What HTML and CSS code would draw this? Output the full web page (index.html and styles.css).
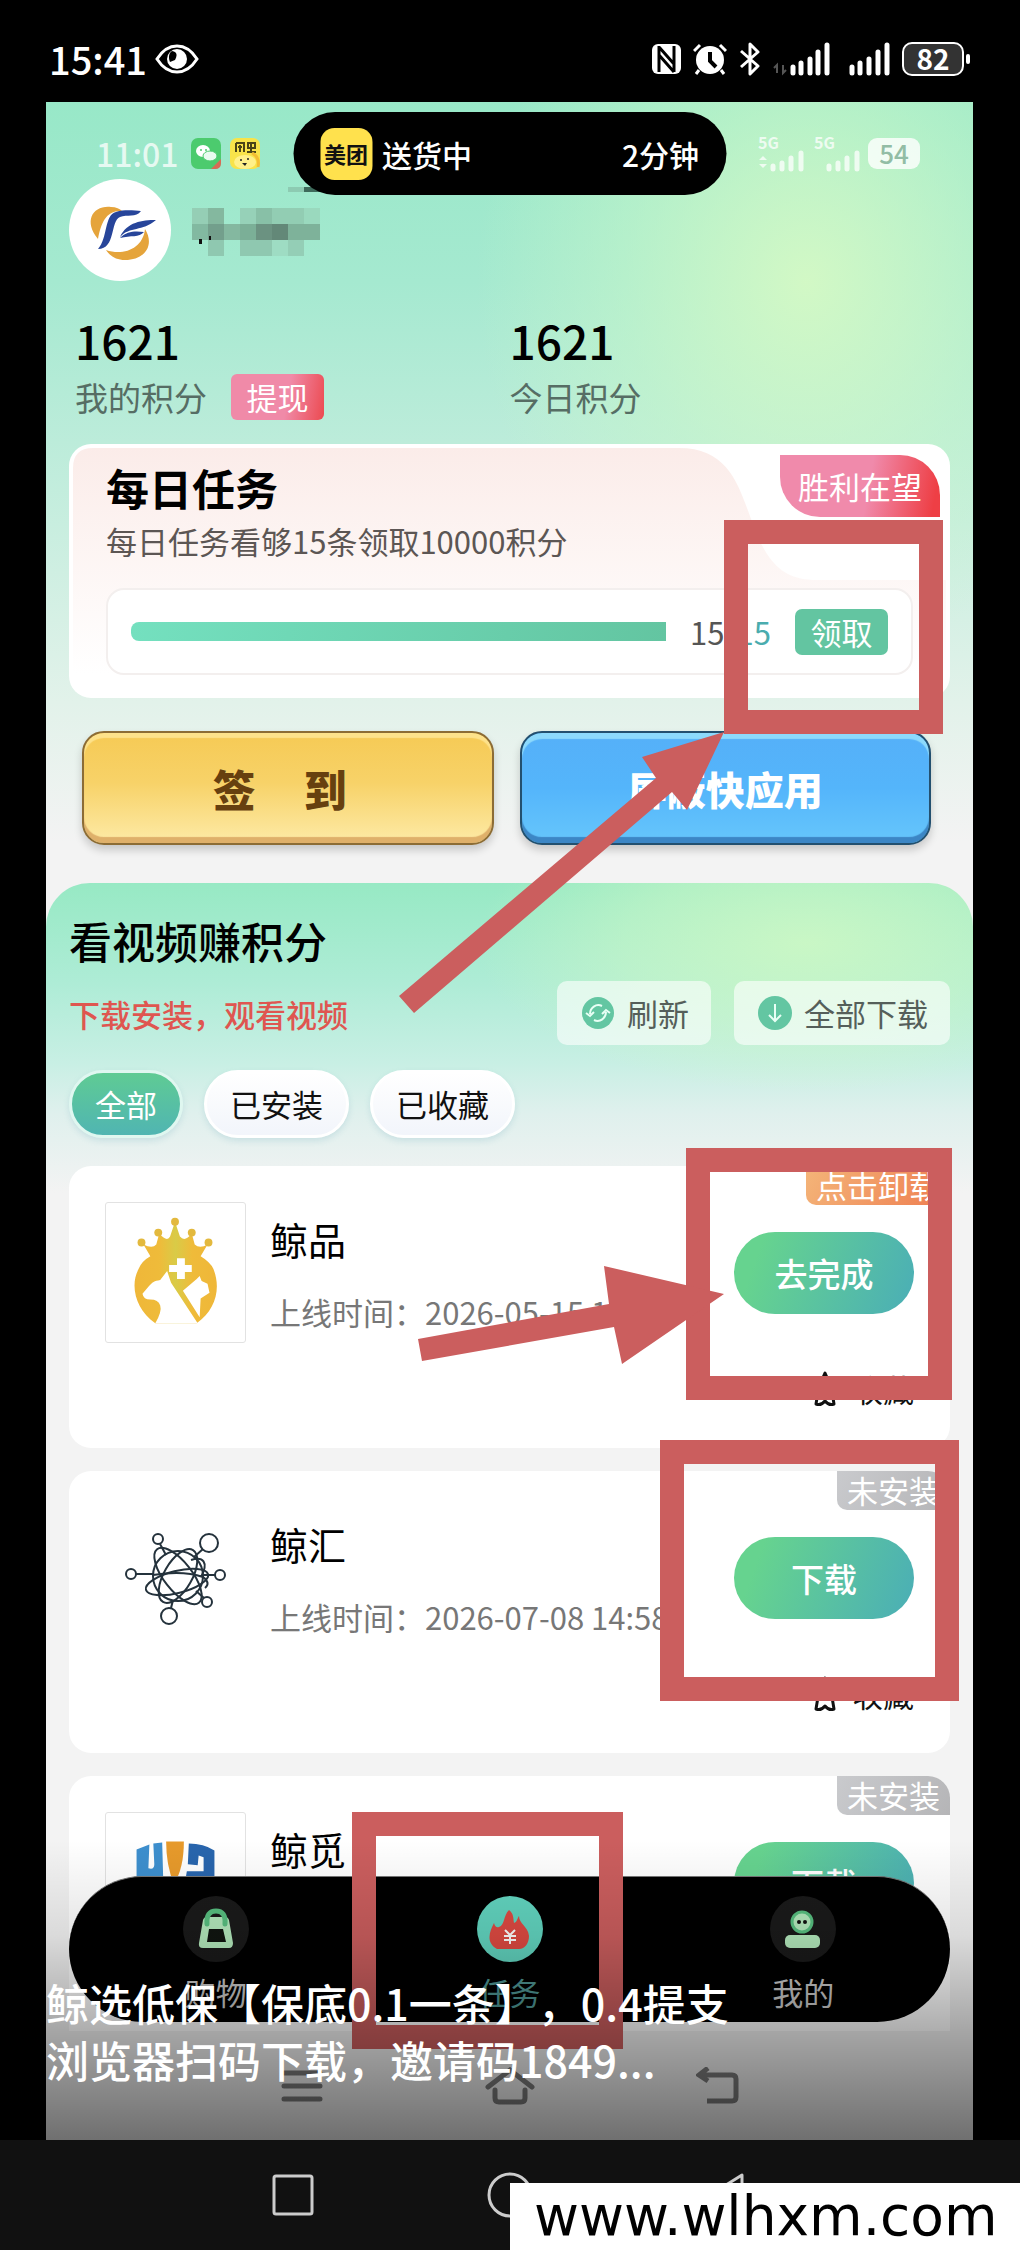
FILE: index.html
```html
<!DOCTYPE html>
<html lang="zh-CN">
<head>
    <meta charset="UTF-8">
    <meta name="viewport" content="width=device-width, initial-scale=1.0">
    <title>看视频赚积分</title>
    <link rel="stylesheet" href="styles.css">
</head>
<body>
    <header class="status-bar">
        <div class="status-left">
            <span class="clock">15:41</span>
            <svg width="44" height="32" viewBox="0 0 44 32"><path d="M2 16C9 5 16 3 22 3s13 2 20 13C35 27 28 29 22 29S9 27 2 16z" fill="none" stroke="#fff" stroke-width="3"/><circle cx="22" cy="16" r="10" fill="#fff"/><path d="M17 8c6 1 5 5 3 9l-5 2c-2-5-1-9 2-11z" fill="#000"/></svg>
        </div>
        <div class="status-right">
            <svg width="30" height="32" viewBox="0 0 30 32"><rect x="0" y="1" width="29" height="30" rx="6" fill="#fff"/><path d="M7 3v26M22 3v26M7 4l15 17M7 12l15 17" stroke="#000" stroke-width="3" fill="none"/></svg>
            <svg class="alarm" width="34" height="32" viewBox="0 0 34 32"><circle cx="17" cy="17" r="14" fill="#fff"/><path d="M1 8l6-6M33 8l-6-6M6 27l-3 4M28 27l3 4" stroke="#fff" stroke-width="3"/><path d="M17 9v9l6 6" stroke="#000" stroke-width="4" fill="none"/></svg>
            <svg class="bluetooth" width="22" height="34" viewBox="0 0 22 34"><path d="M2 9l17 15-8 8V2l8 8L2 25" fill="none" stroke="#fff" stroke-width="3" stroke-linejoin="round"/></svg>
            <svg class="signal" width="58" height="34" viewBox="0 0 58 34"><path d="M4 31v-8l-3 3M10 23v8l3-3" stroke="#555" stroke-width="2" fill="none"/><path d="M20 31v-6M28 31v-10M37 31v-14M45 31V10M54 31V3" stroke="#fff" stroke-width="5" stroke-linecap="round"/></svg>
            <svg class="signal" width="42" height="34" viewBox="0 0 42 34"><path d="M3 31v-6M11 31v-10M20 31v-14M29 31V10M38 31V3" stroke="#fff" stroke-width="5" stroke-linecap="round"/></svg>
            <span class="battery">82</span>
        </div>
    </header>

    <main class="screen">
        <div class="app">
            <div class="app-status">
                <span class="app-clock">11:01</span>
                <svg class="app-icon" width="30" height="31" viewBox="0 0 30 31"><rect width="30" height="31" rx="7" fill="#4ccb6e"/><ellipse cx="12" cy="13" rx="7" ry="6" fill="#fff"/><ellipse cx="19" cy="18" rx="7" ry="5" fill="#e9fbf0" stroke="#4ccb6e"/><circle cx="10" cy="12" r="1" fill="#4ccb6e"/><circle cx="15" cy="12" r="1" fill="#4ccb6e"/><path d="M20 31l10-10v4q0 6-6 6z" fill="#d96a55"/></svg>
                <svg class="app-icon" width="30" height="31" viewBox="0 0 30 31"><rect width="30" height="31" rx="7" fill="#f8e34a"/><path d="M6 5v9M6 5h8v9M10 7v7M8 9h4M18 5h7v5h-7zM21 5v9M17 14h9" stroke="#4b4418" stroke-width="2" fill="none"/><ellipse cx="15" cy="24" rx="11" ry="7" fill="#fff08a"/><path d="M22 15q8 4 6 14" stroke="#f3bd35" stroke-width="3" fill="none"/><circle cx="11" cy="22" r="1" fill="#222"/><circle cx="18" cy="21" r="1" fill="#222"/><path d="M12 25h5l-2 3z" fill="#222"/></svg>
                <div class="networks">
                    <div class="network">
                        <span>5G</span>
                        <svg width="48" height="22" viewBox="0 0 48 22"><path d="M1 10l4-4 4 4zM1 14l4 4 4-4z" fill="#fff"/><path d="M15 19v-3M24 19v-6M33 19V8M43 19V3" stroke="#fff" stroke-width="5" stroke-linecap="round"/></svg>
                    </div>
                    <div class="network">
                        <span>5G</span>
                        <svg width="48" height="22" viewBox="0 0 48 22"><path d="M15 19v-3M24 19v-6M33 19V8M43 19V3" stroke="#fff" stroke-width="5" stroke-linecap="round"/></svg>
                    </div>
                </div>
                <span class="app-battery">54</span>
            </div>
            <div class="island">
                <span class="island-logo">美团</span>
                <span class="island-text">送货中</span>
                <span class="island-time">2分钟</span>
            </div>

            <section class="profile">
                <svg class="avatar" viewBox="0 0 103 103"><circle cx="51" cy="51" r="51" fill="#fff"/><path d="M29 60C14 42 24 26 42 28c5 0 9 2 11 4-16-1-21 12-24 28z" fill="#e5a43b"/><path d="M37 71c17 6 37-1 39-21 10 16 0 31-20 31-9 0-15-4-19-10z" fill="#e5a43b"/><path d="M72 32c-6 0-15-2-25 1-12 3-8 26-18 37 18 0 12-28 22-32 7-3 16 1 21-6z" fill="#27459a"/><path d="M87 41c-14 0-29 2-36 17 10-11 22-5 36-17zM75 53c-9-1-17-1-24 6 11-3 19 0 24-6z" fill="#27459a"/></svg>
                <svg class="masked-name" viewBox="0 0 128 76" shape-rendering="crispEdges">
                    <path d="M96 3h16v5H96z" fill="#8dcbb2"/><path d="M112 3h16v5h-16z" fill="#3e6b5b"/>
                    <path d="M0 24h16v16H0z" fill="#95ceb5"/><path d="M16 24h16v16H16z" fill="#84b89f"/><path d="M48 24h16v16H48z" fill="#96d1b8"/><path d="M64 24h16v16H64z" fill="#88c0a7"/><path d="M80 24h32v16H80z" fill="#92cdb3"/><path d="M112 24h16v16h-16z" fill="#9ad9be"/>
                    <path d="M0 40h16v16H0z" fill="#82b9a1"/><path d="M16 40h16v16H16z" fill="#739f8c"/><path d="M32 40h16v16H32z" fill="#84b8a0"/><path d="M48 40h16v16H48z" fill="#7baf97"/><path d="M64 40h16v16H64z" fill="#6b9281"/><path d="M80 40h16v16H80z" fill="#638878"/><path d="M96 40h32v16H96z" fill="#7eb29a"/>
                    <path d="M16 56h16v16H16z" fill="#8fc8b0"/><path d="M48 56h32v16H48z" fill="#8fc8b0"/><path d="M80 56h16v16H80z" fill="#9edcc3"/><path d="M96 56h16v16H96z" fill="#94ceb6"/>
                    <path d="M7 55h3v5H7zM17 52h2v4h-2z" fill="#111"/>
                </svg>
            </section>

            <section class="stats">
                <div class="stat">
                    <strong class="stat-num">1621</strong>
                    <div class="stat-row">我的积分 <button class="withdraw">提现</button></div>
                </div>
                <div class="stat">
                    <strong class="stat-num">1621</strong>
                    <div class="stat-row">今日积分</div>
                </div>
            </section>

            <section class="daily">
                <svg class="daily-bg" viewBox="0 0 881 254" preserveAspectRatio="none"><defs><linearGradient id="pink" x1="0" y1="0" x2="0" y2="1"><stop offset="0" stop-color="#fbece9"/><stop offset="1" stop-color="#fff"/></linearGradient></defs><path d="M4 24Q4 4 24 4H610c66 0 62 66 88 106 12 18 26 26 50 26h129V230H4z" fill="url(#pink)"/></svg>
                <span class="daily-badge">胜利在望</span>
                <h2>每日任务</h2>
                <p>每日任务看够15条领取10000积分</p>
                <div class="progress">
                    <div class="bar"></div>
                    <span class="count">15/<b>15</b></span>
                    <button class="claim">领取</button>
                </div>
            </section>

            <div class="actions">
                <button class="big gold"><span>签</span><span>到</span></button>
                <button class="big blue">屏蔽快应用</button>
            </div>

            <section class="videos">
                <h2>看视频赚积分</h2>
                <div class="tools">
                    <span class="hint">下载安装，观看视频</span>
                    <button class="tool"><svg width="34" height="34" viewBox="0 0 34 34"><circle cx="17" cy="17" r="16" fill="#63c6a2"/><path d="M9 18c0-6 6-11 12-8M25 16c0 6-6 11-12 8M5 17l4 3 4-4M29 17l-4-3-4 4" fill="none" stroke="#e8fff5" stroke-width="2"/></svg>刷新</button>
                    <button class="tool"><svg width="34" height="34" viewBox="0 0 34 34"><circle cx="17" cy="17" r="17" fill="#63c6a2"/><path d="M17 8v17M11 19l6 6 6-6" fill="none" stroke="#e8fff5" stroke-width="2"/></svg>全部下载</button>
                </div>
                <div class="chips">
                    <button class="chip active">全部</button>
                    <button class="chip">已安装</button>
                    <button class="chip">已收藏</button>
                </div>

                <div class="list">
                    <article class="item">
                        <span class="tag orange">点击卸载</span>
                        <svg class="thumb framed" viewBox="0 0 141 141">
                            <defs><linearGradient id="gold" x1="0" x2="1"><stop offset="0" stop-color="#efb739"/><stop offset=".3" stop-color="#efbb3a"/><stop offset=".5" stop-color="#d9cb47"/><stop offset=".7" stop-color="#efbb3a"/><stop offset="1" stop-color="#efb739"/></linearGradient></defs>
                            <g fill="url(#gold)"><path d="M50 122C30 108 24 84 33 67q3-8 12-13L38 42q9 5 13 0l3-11q8 9 11 3l5-15 5 15q5 6 12-3l3 11q5 5 13 0l-7 12q10 6 13 13c8 20 2 42-17 55z"/></g>
                            <g fill="#e3b93e"><circle cx="36" cy="40" r="4"/><circle cx="53" cy="30" r="4"/><circle cx="70" cy="19" r="4"/><circle cx="87" cy="30" r="4"/><circle cx="104" cy="40" r="4"/></g>
                            <path d="M37 92l6-7c4-5 6-6 12-7l7-9 4 12 27 41H50q7-12 5-18-2-6-10-6-7 0-8-6zM78 89l14-12 3-3 2 5 6 3 2 9-9 6-1 19z" fill="#fff"/>
                            <path d="M72 56h8v7h7v7h-7v7h-8v-7h-8v-7h8z" fill="#fff"/>
                        </svg>
                        <div class="info"><h3>鲸品</h3><p>上线时间：2026-05-15 1</p></div>
                        <div class="side">
                            <button class="go">去完成</button>
                            <button class="fav"><svg width="30" height="38" viewBox="0 0 30 38"><path d="M15 3l4 9 8 2-5 8 2 12q-5 2-9-3-4 5-9 3l2-12-5-8 8-2z" fill="none" stroke="#111" stroke-width="3" stroke-linejoin="round"/></svg>收藏</button>
                        </div>
                    </article>
                    <article class="item">
                        <span class="tag">未安装</span>
                        <svg class="thumb" viewBox="0 0 141 141"><g fill="none" stroke="#24323c" stroke-width="2"><circle cx="73" cy="69" r="25"/><ellipse cx="73" cy="69" rx="14" ry="30" transform="rotate(30 73 69)"/><ellipse cx="73" cy="69" rx="14" ry="34" transform="rotate(-38 73 69)"/><ellipse cx="72" cy="75" rx="32" ry="11" transform="rotate(-14 72 75)"/><path d="M48 68q30-5 50 2 8 6 2 11M86 53c12-4 18 2 10 17"/><circle cx="53" cy="32" r="5"/><path d="M55 37l6 11"/><circle cx="104" cy="36" r="9"/><path d="M98 42l-9 8"/><circle cx="26" cy="67" r="5"/><path d="M31 67h17"/><circle cx="115" cy="68" r="5"/><path d="M110 68H98"/><circle cx="102" cy="95" r="5"/><path d="M99 91l-8-7"/><circle cx="64" cy="109" r="8"/><path d="M66 101l2-8"/></g></svg>
                        <div class="info"><h3>鲸汇</h3><p>上线时间：2026-07-08 14:58</p></div>
                        <div class="side">
                            <button class="go">下载</button>
                            <button class="fav"><svg width="30" height="38" viewBox="0 0 30 38"><path d="M15 3l4 9 8 2-5 8 2 12q-5 2-9-3-4 5-9 3l2-12-5-8 8-2z" fill="none" stroke="#111" stroke-width="3" stroke-linejoin="round"/></svg>收藏</button>
                        </div>
                    </article>
                    <article class="item">
                        <span class="tag">未安装</span>
                        <svg class="thumb framed" viewBox="0 0 141 141"><path d="M31 37l13-5-1 24q6 2 6-4l-1-21 9-1 1 36 4 24-20-2-11-20z" fill="#3d8fce"/><path d="M61 29h18q0 27-10 43-8-18-8-43z" fill="#e79a2b"/><path d="M84 31q15 0 26 7v26L92 82l-13-5 3-18h17V45l-5-2-1 10-10-1z" fill="#2865ad"/></svg>
                        <div class="info"><h3>鲸觅</h3></div>
                        <div class="side"><button class="go">下载</button></div>
                    </article>
                </div>
            </section>

            <nav class="tabbar">
                <a href="#" class="tab"><svg width="66" height="66" viewBox="0 0 66 66"><circle cx="33" cy="33" r="33" fill="#1a1a1a"/><path d="M20 24q1-3 4-3h18q3 0 4 3l4 23q0 5-4 5H20q-5 0-4-5z" fill="#b4eabd"/><path d="M24 28q-1-13 9-13t9 13" fill="none" stroke="#58bf80" stroke-width="5" stroke-linecap="round"/><path d="M26 33h14l3 13H24z" fill="#101510"/></svg>购物</a>
                <a href="#" class="tab current"><svg width="66" height="66" viewBox="0 0 66 66"><circle cx="33" cy="33" r="33" fill="#62d5c0"/><path d="M20 53C8 46 13 35 17 27c1 4 3 5 5 4 6-2 4-11 10-17 5 4 4 8 5 13 3-1 3-4 5-7 0 8 9 10 10 20 0 7-4 13-10 13z" fill="#df4a42"/><path d="M28 34l5 5 5-5M27 40h12M27 44h12M33 38v10" stroke="#fff" stroke-width="2" fill="none"/></svg>任务</a>
                <a href="#" class="tab"><svg width="66" height="66" viewBox="0 0 66 66"><circle cx="33" cy="33" r="33" fill="#1a1a1a"/><circle cx="32" cy="26" r="10" fill="#b4eabd" stroke="#58bf80" stroke-width="3"/><circle cx="29" cy="26" r="2" fill="#111"/><circle cx="35" cy="26" r="2" fill="#111"/><rect x="15" y="39" width="35" height="13" rx="5" fill="#b4eabd"/></svg>我的</a>
            </nav>
        </div>

        <div class="app-nav">
            <svg width="44" height="38" viewBox="0 0 44 38"><path d="M4 6h36M4 19h36M4 32h36" stroke="#7c7c7c" stroke-width="5" stroke-linecap="round"/></svg>
            <svg width="52" height="38" viewBox="0 0 52 38"><path d="M4 20L26 3l22 17M11 23v8q0 4 4 4h22q4 0 4-4v-8" fill="none" stroke="#7c7c7c" stroke-width="5" stroke-linecap="round"/></svg>
            <svg width="44" height="38" viewBox="0 0 44 38"><path d="M12 1L3 8l9 6M4 8h32q4 0 4 4v18q0 4-4 4H11" fill="none" stroke="#7c7c7c" stroke-width="5"/></svg>
        </div>

        <!-- red guide frames and arrows -->
        <svg class="guide" width="927" height="2038" viewBox="46 102 927 2038">
            <g fill="none" stroke="#cb5e5e" stroke-width="24">
                <rect x="736" y="532" width="195" height="190"/>
                <rect x="698" y="1160" width="242" height="228"/>
                <rect x="672" y="1452" width="275" height="237"/>
                <rect x="364" y="1824" width="247" height="213"/>
            </g>
            <g fill="#cb5e5e">
                <path d="M399 996L656 778 642 757 724 732 687 810 672 792 414 1013z"/>
                <path d="M418 1339L609 1304 604 1266 724 1294 622 1364 614 1327 422 1361z"/>
            </g>
        </svg>
        <div class="caption">鲸选低保【保底0.1一条】，0.4提支<br>浏览器扫码下载，邀请码1849...</div>
    </main>

    <footer class="nav-bar">
        <svg width="46" height="46" viewBox="0 0 46 46"><rect x="4" y="4" width="38" height="38" rx="2" fill="none" stroke="#ccc" stroke-width="3"/></svg>
        <svg width="46" height="46" viewBox="0 0 46 46"><circle cx="23" cy="23" r="21" fill="none" stroke="#ccc" stroke-width="3"/></svg>
        <svg width="46" height="46" viewBox="0 0 46 46"><path d="M38 3v40L6 23z" fill="none" stroke="#ccc" stroke-width="3" stroke-linejoin="round"/></svg>
        <div class="watermark">www.wlhxm.com</div>
    </footer>
</body>
</html>
```
FILE: styles.css
```css
* {
    box-sizing: border-box;
}
body {
    margin: 0;
    height: 100vh;
    display: flex;
    flex-direction: column;
    overflow: hidden;
    background: #000;
    color: #000;
    font-family: "Noto Sans CJK SC", sans-serif;
    font-size: 31px;
    text-spacing-trim: space-all;
}
h2, h3, p {
    margin: 0;
}
button {
    border: none;
    padding: 0;
    font-family: inherit;
    font-size: 31px;
    line-height: 40px;
    cursor: pointer;
    white-space: nowrap;
}
svg {
    flex-shrink: 0;
    display: block;
}

/* phone status bar */
.status-bar {
    height: 102px;
    flex-shrink: 0;
    padding: 16px 56px 0 49px;
    display: flex;
    align-items: center;
    justify-content: space-between;
    color: #fff;
}
.status-left, .status-right {
    display: flex;
    align-items: center;
}
.clock {
    font-size: 38px;
    font-weight: 500;
    line-height: 40px;
    margin-right: 8px;
}
.alarm {
    margin-left: 11px;
}
.bluetooth {
    margin-left: 12px;
}
.signal {
    margin-left: 12px;
}
.signal + .signal {
    margin-left: 18px;
}
.battery {
    position: relative;
    width: 62px;
    height: 34px;
    margin-left: 11px;
    border: 2px solid #fff;
    border-radius: 10px;
    background: #333;
    font-size: 28px;
    font-weight: 700;
    line-height: 29px;
    text-align: center;
}
.battery::after {
    content: "";
    position: absolute;
    right: -8px;
    top: 10px;
    width: 4px;
    height: 10px;
    border-radius: 2px;
    background: #fff;
}

/* app screen */
.screen {
    position: relative;
    flex: 1;
    min-height: 0;
    margin: 0 47px 0 46px;
    display: flex;
    flex-direction: column;
    background: #f3f3f3;
    overflow: hidden;
}
.app {
    position: relative;
    flex: 1;
    min-height: 0;
    overflow: hidden;
    background:
        radial-gradient(ellipse 330px 380px at 82% 180px, rgba(215, 250, 196, 0.9), rgba(200, 247, 200, 0.5) 55%, rgba(200, 247, 200, 0)),
        linear-gradient(#98e8c8, #a5e9d0 180px, #bcecda 340px, #e2f2ea 600px, #f3f3f3 740px);
}
.app-status {
    height: 77px;
    padding: 25px 53px 0 50px;
    display: flex;
    align-items: center;
}
.app-clock {
    color: rgba(255, 255, 255, 0.75);
    font-size: 32px;
    font-weight: 500;
    line-height: 40px;
    margin-right: 12px;
}
.app-icon {
    margin-right: 9px;
}
.networks {
    display: flex;
    gap: 8px;
    margin-left: auto;
    opacity: 0.75;
}
.network {
    color: #fff;
    font-size: 16px;
    font-weight: 700;
    line-height: 16px;
}
.app-battery {
    width: 52px;
    height: 31px;
    margin-left: 6px;
    border-radius: 9px;
    background: rgba(255, 255, 255, 0.8);
    color: #92bda5;
    font-size: 26px;
    font-weight: 500;
    line-height: 30px;
    text-align: center;
}
.island {
    position: absolute;
    top: 10px;
    left: 50%;
    transform: translateX(-50%);
    width: 433px;
    height: 83px;
    padding: 0 27px;
    border-radius: 42px;
    background: #000;
    color: #fff;
    display: flex;
    align-items: center;
    font-size: 30px;
    font-weight: 500;
    line-height: 40px;
}
.island-logo {
    width: 52px;
    height: 52px;
    margin-right: 10px;
    border-radius: 14px;
    background: #ffe14d;
    color: #111;
    font-size: 22px;
    font-weight: 700;
    line-height: 50px;
    text-align: center;
}
.island-time {
    margin-left: auto;
}

.profile {
    display: flex;
    padding-left: 23px;
}
.avatar {
    width: 103px;
    height: 103px;
}
.masked-name {
    width: 128px;
    height: 76px;
    margin: 5px 0 0 20px;
}

.stats {
    display: grid;
    grid-template-columns: 1fr 1fr;
    margin-top: 28px;
}
.stat:first-child {
    padding-left: 29px;
}
.stat-num {
    display: block;
    font-size: 46px;
    font-weight: 500;
    line-height: 60px;
    margin-bottom: 4px;
}
.stat-row {
    display: flex;
    align-items: center;
    height: 46px;
    font-size: 33px;
    color: #566d64;
}
.withdraw {
    width: 93px;
    height: 46px;
    margin-left: 24px;
    border-radius: 6px;
    background: linear-gradient(100deg, #f08aa8 60%, #ec4a50);
    color: #fff;
}

/* daily task card */
.daily {
    position: relative;
    margin: 24px 23px 0;
    padding: 15px 37px 23px;
    border-radius: 22px;
    background: #fff;
}
.daily > * {
    position: relative;
}
.daily .daily-bg {
    position: absolute;
    left: 0;
    top: 0;
    width: 100%;
    height: 100%;
}
.daily h2 {
    font-size: 43px;
    font-weight: 700;
    line-height: 56px;
    margin-bottom: 3px;
}
.daily p {
    line-height: 46px;
    color: #5c5654;
}
.daily .daily-badge {
    position: absolute;
    right: 10px;
    top: 11px;
    width: 160px;
    height: 62px;
    border-radius: 0 40px 0 40px;
    background: linear-gradient(100deg, #f08aab 55%, #ee3f45 95%);
    color: #fff;
    line-height: 62px;
    text-align: center;
}
.progress {
    display: flex;
    align-items: center;
    height: 87px;
    margin-top: 24px;
    padding: 0 23px;
    border: 2px solid #f3efee;
    border-radius: 18px;
    background: #fff;
}
.bar {
    flex: 1;
    height: 19px;
    border-radius: 8px 0 0 8px;
    background: linear-gradient(100deg, #74e0bf, #63c5a1);
}
.count {
    margin: 0 24px;
    color: #555;
}
.count b {
    color: #4aacae;
    font-weight: 400;
}
.claim {
    width: 93px;
    height: 46px;
    border-radius: 7px;
    background: #63c5a1;
    color: #fff;
}

.actions {
    display: grid;
    grid-template-columns: 1fr 1fr;
    gap: 26px;
    margin-top: 33px;
    padding: 0 42px 0 36px;
}
.big {
    height: 114px;
    border-radius: 22px;
    font-size: 39px;
    font-weight: 900;
}
.gold {
    display: flex;
    align-items: center;
    justify-content: center;
    gap: 48px;
    padding-right: 16px;
    border: 2px solid #8c6c35;
    background: linear-gradient(#f6ca55, #f7d268 45%, #fdeaa6);
    box-shadow: inset 0 5px 1px #fde28b, inset 0 -6px 1px #dfb06a, 0 5px 8px rgba(0, 0, 0, 0.18);
    color: #67400f;
    font-size: 43px;
}
.blue {
    border: 2px solid #23506f;
    background: linear-gradient(#55b0f8, #54b5fb 50%, #66c6fb);
    box-shadow: inset 0 6px 1px #8ddafc, inset 0 -6px 1px #3c86c5, 0 5px 8px rgba(0, 0, 0, 0.18);
    color: #fff;
}

/* video list */
.videos {
    margin-top: 38px;
    padding: 27px 23px 0;
    border-radius: 44px 44px 0 0;
    background:
        radial-gradient(ellipse 330px 150px at 82% 60px, rgba(205, 248, 196, 0.9), rgba(205, 248, 196, 0.5) 55%, rgba(205, 248, 196, 0)),
        linear-gradient(#97e9c4, #aeecd6 100px, #c8efe4 180px, #dff0ed 230px, #f3f3f3 310px);
}
.videos h2 {
    font-size: 43px;
    font-weight: 500;
    line-height: 60px;
}
.tools {
    display: flex;
    align-items: center;
    gap: 23px;
    height: 64px;
    margin-top: 11px;
}
.hint {
    margin-right: auto;
    color: #df5650;
    font-weight: 500;
}
.tool {
    display: flex;
    align-items: center;
    gap: 12px;
    height: 64px;
    padding: 0 22px 0 24px;
    border-radius: 10px;
    background: rgba(255, 255, 255, 0.6);
    color: #555f5a;
}
.chips {
    display: flex;
    gap: 21px;
    margin-top: 25px;
}
.chip {
    height: 68px;
    padding: 0 23px;
    border: 3px solid #fff;
    border-radius: 34px;
    background: linear-gradient(#fff, #f2f5fb);
    box-shadow: 0 3px 6px rgba(90, 160, 180, 0.2);
    color: #111;
}
.chip.active {
    border-color: #dff7f0;
    background: linear-gradient(#5fcb94, #50b5b2);
    color: #fff;
}
.list {
    display: flex;
    flex-direction: column;
    gap: 23px;
    margin-top: 28px;
}
.item {
    position: relative;
    display: flex;
    height: 282px;
    padding: 36px;
    border-radius: 22px;
    background: #fff;
    overflow: hidden;
}
.tag {
    position: absolute;
    right: 0;
    top: 0;
    height: 39px;
    padding: 0 10px;
    border-radius: 0 0 0 10px;
    background: linear-gradient(120deg, #c9cacd, #b5b5b7);
    color: #fff;
    line-height: 38px;
}
.tag.orange {
    background: linear-gradient(120deg, #f4b579, #ee7d50);
}
.thumb {
    width: 141px;
    height: 141px;
    background: #fff;
}
.framed {
    border: 1px solid #e2e2e2;
    border-radius: 3px;
}
.info {
    flex: 1;
    padding: 12px 0 0 24px;
    white-space: nowrap;
}
.info h3 {
    font-size: 38px;
    font-weight: 400;
    line-height: 50px;
    margin-bottom: 28px;
}
.info p {
    line-height: 40px;
    color: #777;
}
.side {
    display: flex;
    flex-direction: column;
    align-items: flex-end;
    padding-top: 30px;
}
.go {
    width: 180px;
    height: 82px;
    flex-shrink: 0;
    border-radius: 41px;
    background: linear-gradient(110deg, #66d38f 15%, #4cb0b4 95%);
    color: #fff;
    font-size: 33px;
    font-weight: 500;
}
.fav {
    display: flex;
    align-items: center;
    gap: 12px;
    margin-top: 55px;
    background: none;
    color: #111;
}

/* bottom tabs */
.tabbar {
    position: absolute;
    left: 23px;
    right: 23px;
    bottom: 9px;
    height: 146px;
    display: flex;
    justify-content: space-around;
    border-top: 1px solid #777;
    border-radius: 73px;
    background: #000;
}
.tab {
    flex: 1;
    display: flex;
    flex-direction: column;
    align-items: center;
    padding-top: 19px;
    color: #ccc;
    line-height: 40px;
    text-decoration: none;
}
.tab svg {
    margin-bottom: 10px;
}
.tab.current {
    color: #4f9795;
}
.app-nav {
    height: 109px;
    flex-shrink: 0;
    display: flex;
    justify-content: center;
    align-items: center;
    gap: 160px;
}
.guide {
    position: absolute;
    left: 0;
    top: 0;
}
.caption {
    position: absolute;
    left: 0;
    right: 0;
    bottom: 0;
    height: 300px;
    padding-top: 134px;
    background: linear-gradient(rgba(0, 0, 0, 0), rgba(0, 0, 0, 0.1) 32%, rgba(0, 0, 0, 0.32) 64%, rgba(0, 0, 0, 0.54));
    color: #fff;
    font-size: 43px;
    font-weight: 500;
    line-height: 57px;
}

/* system navigation */
.nav-bar {
    position: relative;
    height: 110px;
    flex-shrink: 0;
    display: flex;
    justify-content: center;
    align-items: center;
    gap: 171px;
    background: #111;
}
.watermark {
    position: absolute;
    right: 0;
    bottom: 0;
    width: 510px;
    height: 67px;
    padding-left: 24px;
    background: #fff;
    color: #000;
    font-family: "DejaVu Sans", sans-serif;
    font-size: 55px;
    line-height: 67px;
}
```
